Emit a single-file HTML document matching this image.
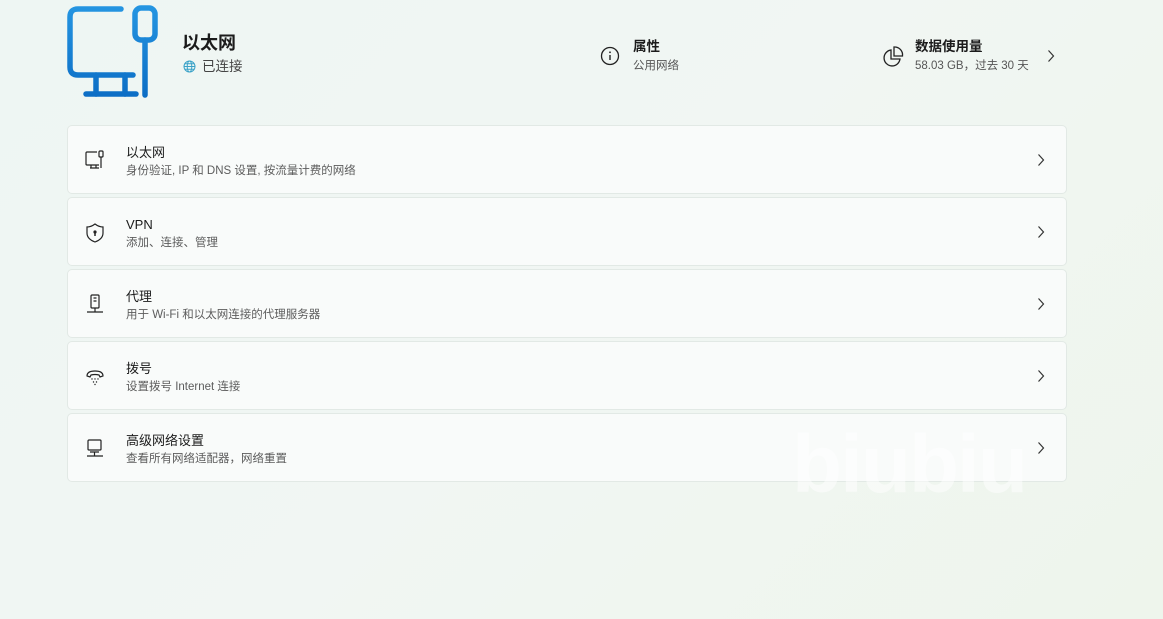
<!DOCTYPE html>
<html><head><meta charset="utf-8"><style>
*{margin:0;padding:0;box-sizing:border-box}
body{width:1163px;height:619px;overflow:hidden;background:linear-gradient(135deg,#eef6f3 0%,#f1f6f3 50%,#eef5ec 100%);font-family:"Liberation Sans","Noto Sans CJK SC",sans-serif;color:#1b1b1b;position:relative}
.abs{position:absolute}
.card{position:absolute;left:67px;width:1000px;height:69px;background:#f9fbfa;border:1px solid #e2e9e5;border-radius:5px}
.card .t{position:absolute;left:58px;top:18px;font-size:13px;line-height:18px;color:#1b1b1b}
.card .s{position:absolute;left:58px;top:37px;font-size:11.5px;line-height:16px;color:#5c5c5c}
.card .ic{position:absolute;left:16px;top:24px}
.card .ch{position:absolute;right:20px;top:27px}
</style></head><body>
<svg class="abs" style="left:66px;top:5px" width="96" height="95" viewBox="0 0 96 95">
<defs><linearGradient id="g" gradientUnits="userSpaceOnUse" x1="0" y1="0" x2="0" y2="95"><stop offset="0" stop-color="#2596e2"/><stop offset="1" stop-color="#0b6cc4"/></linearGradient></defs>
<g fill="none" stroke="url(#g)" stroke-width="5.5" stroke-linecap="round" stroke-linejoin="round">
<path d="M55 4H12Q4 4 4 12V62Q4 70 12 70H67"/>
<rect x="69" y="3" width="20" height="32" rx="6"/>
<path d="M79 35V90"/>
<path d="M20 89H70"/><path d="M30 70V89M59 70V89"/>
</g></svg>
<div class="abs" style="left:182px;top:31px;font-size:18px;font-weight:bold;line-height:24px">以太网</div>
<svg class="abs" style="left:183px;top:60px" width="13" height="13" viewBox="0 0 13 13"><g fill="none" stroke="#3aa2c8" stroke-width="1"><circle cx="6.5" cy="6.5" r="5.5"/><ellipse cx="6.5" cy="6.5" rx="2.3" ry="5.5"/><path d="M1 6.5H12M2 3.8H11M2 9.2H11"/></g></svg>
<div class="abs" style="left:202px;top:57px;font-size:13.5px;color:#444;line-height:20px">已连接</div>

<svg class="abs" style="left:600px;top:46px" width="20" height="20" viewBox="0 0 20 20"><circle cx="10" cy="10" r="8.5" fill="none" stroke="#222" stroke-width="1.3"/><path d="M10 9V14" stroke="#222" stroke-width="1.4"/><circle cx="10" cy="6.3" r="0.9" fill="#222"/></svg>
<div class="abs" style="left:633px;top:37px;font-size:13.5px;font-weight:bold;line-height:20px">属性</div>
<div class="abs" style="left:633px;top:58px;font-size:11.5px;color:#555;line-height:16px">公用网络</div>

<svg class="abs" style="left:882px;top:46px" width="22" height="22" viewBox="0 0 22 22"><g fill="none" stroke="#222" stroke-width="1.3"><path d="M9 4A8 8 0 1 0 18 13H9Z"/><path d="M12 1A8 8 0 0 1 20.5 10H12Z"/></g></svg>
<div class="abs" style="left:915px;top:37px;font-size:13.5px;font-weight:bold;line-height:20px">数据使用量</div>
<div class="abs" style="left:915px;top:58px;font-size:11.5px;color:#555;line-height:16px">58.03 GB，过去 30 天</div>
<svg class="abs" style="left:1046px;top:49px" width="10" height="14" viewBox="0 0 10 14"><path d="M2.5 1.5L7.5 7L2.5 12.5" fill="none" stroke="#333" stroke-width="1.2"/></svg>

<div class="card" style="top:125px">
<svg class="ic" width="22" height="22" viewBox="0 0 22 22"><g fill="none" stroke="#222" stroke-width="1.2"><path d="M13 2H3Q2 2 2 3V14Q2 15 3 15H15"/><rect x="15" y="1" width="4" height="6" rx="1"/><path d="M17 7V18M6 18H15M7 15V18M12 15V18"/></g></svg>
<div class="t">以太网</div><div class="s">身份验证, IP 和 DNS 设置, 按流量计费的网络</div>
<svg class="ch" width="10" height="14" viewBox="0 0 10 14"><path d="M2.5 1.5L7.5 7L2.5 12.5" fill="none" stroke="#333" stroke-width="1.2"/></svg></div>

<div class="card" style="top:197px">
<svg class="ic" width="22" height="22" viewBox="0 0 22 22"><g fill="none" stroke="#222" stroke-width="1.2"><path d="M11 2Q7 5 3 5V11Q3 17 11 20Q19 17 19 11V5Q15 5 11 2Z"/></g><circle cx="11" cy="10" r="1.6" fill="#222"/><path d="M11 10V14" stroke="#222" stroke-width="1.5"/></svg>
<div class="t">VPN</div><div class="s">添加、连接、管理</div>
<svg class="ch" width="10" height="14" viewBox="0 0 10 14"><path d="M2.5 1.5L7.5 7L2.5 12.5" fill="none" stroke="#333" stroke-width="1.2"/></svg></div>

<div class="card" style="top:269px">
<svg class="ic" width="22" height="22" viewBox="0 0 22 22"><g fill="none" stroke="#222" stroke-width="1.2"><rect x="7" y="1" width="8" height="13" rx="1"/><path d="M9.5 4H12.5M9.5 7H12.5M11 14V18M3 18H19"/></g></svg>
<div class="t">代理</div><div class="s">用于 Wi-Fi 和以太网连接的代理服务器</div>
<svg class="ch" width="10" height="14" viewBox="0 0 10 14"><path d="M2.5 1.5L7.5 7L2.5 12.5" fill="none" stroke="#333" stroke-width="1.2"/></svg></div>

<div class="card" style="top:341px">
<svg class="ic" width="22" height="22" viewBox="0 0 22 22"><g fill="none" stroke="#222" stroke-width="1.2"><path d="M3 10Q3 5 11 5Q19 5 19 10L16 11L15 9Q11 8 7 9L6 11Z"/></g><g fill="#222"><circle cx="8" cy="13" r=".7"/><circle cx="11" cy="13" r=".7"/><circle cx="14" cy="13" r=".7"/><circle cx="9.5" cy="16" r=".7"/><circle cx="12.5" cy="16" r=".7"/><circle cx="11" cy="18.5" r=".7"/></g></svg>
<div class="t">拨号</div><div class="s">设置拨号 Internet 连接</div>
<svg class="ch" width="10" height="14" viewBox="0 0 10 14"><path d="M2.5 1.5L7.5 7L2.5 12.5" fill="none" stroke="#333" stroke-width="1.2"/></svg></div>

<div class="card" style="top:413px">
<svg class="ic" width="22" height="22" viewBox="0 0 22 22"><g fill="none" stroke="#222" stroke-width="1.2"><rect x="4" y="2" width="13" height="10" rx="1"/><path d="M6 14H15M10.5 14V18M3 18H19"/></g></svg>
<div class="t">高级网络设置</div><div class="s">查看所有网络适配器，网络重置</div>
<svg class="ch" width="10" height="14" viewBox="0 0 10 14"><path d="M2.5 1.5L7.5 7L2.5 12.5" fill="none" stroke="#333" stroke-width="1.2"/></svg></div>

<div class="abs" style="left:792px;top:420px;font-size:82px;line-height:90px;font-weight:bold;color:rgba(255,255,255,0.5);letter-spacing:-2px">biubiu</div>
</body></html>
